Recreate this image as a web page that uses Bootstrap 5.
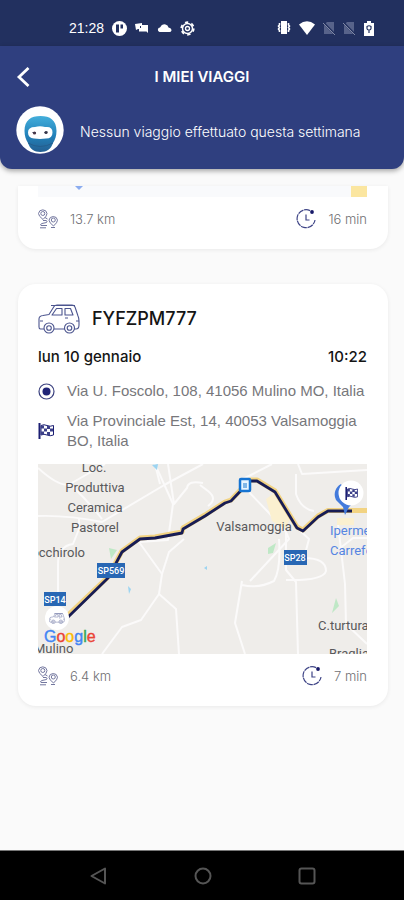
<!DOCTYPE html>
<html lang="it">
<head>
<meta charset="utf-8">
<meta name="viewport" content="width=device-width, initial-scale=1">
<title>I miei viaggi</title>
<link href="https://cdn.jsdelivr.net/npm/bootstrap@5.3.0/dist/css/bootstrap.min.css" rel="stylesheet">
<style>
  body { background: #fafafa; font-family: Inter, "Liberation Sans", sans-serif; font-size: 14px; line-height: 20px; color: #6f6f73; }
  svg { display: block; flex: none; }
  .status-bar { background: #22305f; color: #fff; height: 46px; padding: 18px 29px 0 69px; font-family: "Liberation Sans", sans-serif; }
  .app-header { background: #2f3f7f; color: #fff; border-radius: 0 0 12px 12px; box-shadow: 0 2px 5px rgba(0,0,0,.35); z-index: 1; padding: 0 16px 15px; }
  .title-row { height: 60px; padding-top: 2px; }
  .title-row h1 { font-size: 15px; line-height: 20px; font-weight: 600; }
  .title-row .side { width: 24px; }
  .message { font-weight: 300; }
  .trips { padding: 17px 16px 0 18px; }
  .trip { background: #fff; border: 0; border-radius: 18px; box-shadow: 0 1px 4px rgba(0,0,0,.07); padding: 20px 21px 20px 20px; }
  .trip-partial { border-radius: 0 0 18px 18px; padding-top: 0; margin-bottom: 35px; }
  .strong-text { color: #151515; font-weight: 500; }
  .plate { font-size: 18px; line-height: 30px; }
  .when { font-size: 15px; padding: 13px 0 14px; }
  .address { font-family: "Liberation Sans", sans-serif; font-size: 15px; color: #77777b; row-gap: 10px; }
  .stats { font-weight: 300; font-size: 13px; padding-top: 12px; }
  .route { margin-top: 13px; }
  .map text { font-family: Roboto, "Liberation Sans", sans-serif; font-size: 13px; fill: #59595b; }
  .map .shield { font-size: 9px; fill: #fff; font-weight: 500; }
  .map .poi { fill: #5585e2; }
  .map .brand { font-family: "Liberation Sans", sans-serif; font-size: 16px; font-weight: 400; }
  .map .g-blue { fill: #4285f4; stroke: #4285f4; stroke-width: .4px; }
  .map .g-red { fill: #ea4335; stroke: #ea4335; stroke-width: .4px; }
  .map .g-yellow { fill: #fbbc05; stroke: #fbbc05; stroke-width: .4px; }
  .map .g-green { fill: #34a853; stroke: #34a853; stroke-width: .4px; }
  .sys-nav { background: #000; height: 50px; border-top: 1px solid #777; padding: 0 84px 0 86px; }
</style>
<script src="https://cdn.jsdelivr.net/npm/bootstrap@5.3.0/dist/js/bootstrap.bundle.min.js"></script>
</head>
<body>
<svg width="0" height="0" class="position-absolute" aria-hidden="true">
  <defs>
    <symbol id="car" viewBox="0 0 42 30">
      <g fill="none" stroke="#4c558f" stroke-width="1.1" stroke-linejoin="round">
        <path d="M6 25H2.500Q1 25 1 23V15Q1 12 5 11.500L11 10.500 16 2.500Q17 1 19 1H34Q36 1 37 3L40 12Q41 14 41 17V21Q41 25 38 25H36M16 25H27"/>
        <path d="M14 11 18.500 4.500H24V11ZM27 4.500H32.500L35 11H27ZM13 1.500H37"/>
        <circle cx="11" cy="24" r="5"/><circle cx="11" cy="24" r="2.300"/>
        <circle cx="31.500" cy="24" r="5"/><circle cx="31.500" cy="24" r="2.300"/>
        <path d="M2 17H5M38 17H41M27 14H30"/>
      </g>
    </symbol>
    <symbol id="flag" viewBox="0 0 16 16">
      <path d="M1.500 0V16" stroke="#1c1f73" stroke-width="2"/>
      <path d="M3 2.500Q6 1 9 2.500T15.500 2.500V12Q12 13.500 9 12T3 12Z" fill="#fff" stroke="#1c1f73"/>
      <path d="M3 2.500h3v3H3zM9 3h3v3H9zM6 5.500h3v3H6zM12 5.500h3v3h-3zM3 8.500h3v3H3zM9 9h3v3H9z" fill="#3c4089"/>
    </symbol>
    <symbol id="distance" viewBox="0 0 20 20">
      <g fill="none" stroke="#73779f" stroke-width="1">
        <path d="M5 10.500Q.5 7 .5 4.500A4.300 4.300 0 0 1 9 4.500Q9 7 5 10.500Z"/><circle cx="4.800" cy="4.500" r="2"/>
        <path d="M15.500 17Q11 13.500 11 11.200A4.300 4.300 0 0 1 19.500 11.200Q19.500 13.500 15.500 17Z"/><circle cx="15.300" cy="11" r="2"/>
        <path d="M5 11.500H8Q10 12 8.500 13.500L4 14.500Q1.500 15.500 3 16.500H9M2 18.800H8M13 18.500H17M7 8.500 9.500 10"/>
      </g>
    </symbol>
    <symbol id="clock" viewBox="0 0 20 20">
      <g fill="none" stroke="#3e4486" stroke-width="1.200">
        <path d="M14 1.600A9 9 0 1 0 19 11" stroke-dasharray="6 .7"/><path d="M10 5.500V11H13.500"/>
      </g>
      <circle cx="16" cy="3" r="1.900" fill="#171968"/>
    </symbol>
  </defs>
</svg>

<div class="d-flex flex-column min-vh-100">
  <div class="status-bar d-flex justify-content-between align-items-start">
    <div class="d-flex align-items-center gap-2">
      <span>21:28</span>
      <svg width="15" height="15" viewBox="0 0 15 15"><circle cx="7.500" cy="7.500" r="7.500" fill="#fff"/><path d="M4 3.500H7V11.500H4ZM8.500 3.500H11V7.500H8.500Z" fill="#22305f"/></svg>
      <svg width="14" height="12" viewBox="0 0 14 12" fill="#fff"><path d="M0 2 7 1V4H5V7H3L1 8Z"/><path d="M6 3H13V11L11.500 9.500H4V6H6Z"/></svg>
      <svg width="15" height="10" viewBox="0 0 15 10"><path d="M2.500 9A2.300 2.300 0 0 1 3 4.500Q5 .5 8.500 1.500Q11 2 11.500 4.500Q14.500 5 14.500 7.500 14 9 12.500 9Z" fill="#fff"/></svg>
      <svg width="15" height="15" viewBox="0 0 15 15" fill="none" stroke="#fff"><circle cx="7.500" cy="7.500" r="5" stroke-width="1.500"/><circle cx="7.500" cy="7.500" r="2" stroke-width="1.300"/><circle cx="7.500" cy="7.500" r="6.300" stroke-width="1.700" stroke-dasharray="3.300 3.300"/></svg>
    </div>
    <div class="d-flex align-items-center gap-2">
      <svg width="14" height="20" viewBox="0 -3 14 20"><path d="M4 0H10V13H4Z" fill="#fff"/><path d="M2.500 2V4L1.500 5 2.500 6.500 1.500 8 2.500 9.500V11M11.500 2V4L12.500 5 11.500 6.500 12.500 8 11.500 9.500V11" fill="none" stroke="#fff" stroke-width="1.600"/></svg>
      <svg width="16" height="14" viewBox="0 0 16 14"><path d="M0 3.500Q8-3 16 3.500L8 14Z" fill="#fff"/></svg>
      <svg width="12" height="14" viewBox="0 0 12 14"><path d="M1 4 4 1H11V13H1Z" fill="#58638a"/><path d="M0 1 12 13.500" stroke="#22305f" stroke-width="2"/><path d="M0 2 12 14" stroke="#8088a5"/></svg>
      <svg width="12" height="14" viewBox="0 0 12 14"><path d="M1 4 4 1H11V13H1Z" fill="#58638a"/><path d="M0 1 12 13.500" stroke="#22305f" stroke-width="2"/><path d="M0 2 12 14" stroke="#8088a5"/></svg>
      <svg width="12" height="15" viewBox="0 0 12 15"><path d="M1 2H4V0H8V2H11V15H1Z" fill="#fff"/><path d="M6 12V9.500M4 5.500V7.500Q4 9 6 9T8 7.500V5.500Q6 4 4 5.500Z" fill="none" stroke="#22305f" stroke-width="1.200"/></svg>
    </div>
  </div>

  <header class="app-header position-relative">
    <div class="title-row d-flex align-items-center justify-content-between">
      <button type="button" class="btn p-0 border-0 side" aria-label="Indietro">
        <svg width="16" height="20" viewBox="0 0 16 20"><path d="M12.500 1 3 10 12.500 19" fill="none" stroke="#fff" stroke-width="2.800"/></svg>
      </button>
      <h1 class="m-0">I MIEI VIAGGI</h1>
      <span class="side"></span>
    </div>
    <div class="d-flex align-items-center gap-3">
      <svg width="48" height="48" viewBox="0 0 48 48" role="img" aria-label="Profilo">
        <defs><linearGradient id="hood" x2="0" y2="1"><stop stop-color="#43aedb"/><stop offset=".55" stop-color="#2281b9"/><stop offset="1" stop-color="#245f92"/></linearGradient></defs>
        <circle cx="24" cy="24" r="23.700" fill="#fff"/>
        <path d="M8.500 25C8.500 14 15 10 24.500 10S40.500 14 40.500 25C40.500 30 39 34 37 37C35 43 31 46 24.500 46S14 43 12 37C10 34 8.500 30 8.500 25Z" fill="url(#hood)"/>
        <path d="M12 37Q24 44 37 37" fill="none" stroke="#245b88" stroke-width=".8"/>
        <path d="M19 21Q24 19.500 29 21H31Q36.500 21 36.500 26.500 36.500 32.500 30 32.500L24 33 18 32.500Q12 32 12 26.500 12 21 19 21Z" fill="#fff"/>
        <circle cx="18.500" cy="27" r="1.600" fill="#55384b"/><circle cx="30" cy="26.500" r="1.600" fill="#343347"/>
        <path d="M16.500 26.500 20 27M28.500 26.500 31.500 26" stroke="#353549"/>
      </svg>
      <p class="message m-0 pt-1">Nessun viaggio effettuato questa settimana</p>
    </div>
  </header>

  <main class="trips flex-grow-1">
    <article class="card trip trip-partial">
      <svg class="w-100" viewBox="0 0 329 11" role="img" aria-label="Mappa">
        <path d="M0 0H329V11H0Z" fill="#f9fafc"/><path d="M37 0H45L41 4Z" fill="#8bacef"/><path d="M313 0H329V11H313Z" fill="#fbe6a0"/>
      </svg>
      <div class="stats d-flex justify-content-between align-items-center">
        <span class="d-flex align-items-center gap-2"><svg width="24" height="20"><use href="#distance" width="20" height="20"/></svg>13.7 km</span>
        <span class="d-flex align-items-center gap-2"><svg width="24" height="20"><use href="#clock" width="20" height="20"/></svg>16 min</span>
      </div>
    </article>

    <article class="card trip">
      <div class="d-flex align-items-center gap-2">
        <svg width="46" height="30"><use href="#car" width="42" height="30"/></svg>
        <h2 class="plate strong-text m-0">FYFZPM777</h2>
      </div>
      <div class="when strong-text d-flex justify-content-between"><span>lun 10 gennaio</span><span>10:22</span></div>
      <div class="address d-flex flex-column">
        <div class="d-flex align-items-center gap-2">
          <svg width="21" height="17" viewBox="0 0 21 17"><circle cx="8.500" cy="8.500" r="7.500" fill="none" stroke="#3b417f" stroke-width="1.200"/><circle cx="8.500" cy="8.500" r="4" fill="#202477"/></svg>
          <span>Via U. Foscolo, 108, 41056 Mulino MO, Italia</span>
        </div>
        <div class="d-flex align-items-center gap-2">
          <svg width="21" height="16"><use href="#flag" width="16" height="16"/></svg>
          <span>Via Provinciale Est, 14, 40053 Valsamoggia BO, Italia</span>
        </div>
      </div>
      <svg class="map route w-100" viewBox="0 0 329 190" role="img" aria-label="Percorso del viaggio">
        <path d="M0 0H329V190H0Z" fill="#efedea"/>
        <g fill="none" stroke="#fbfafa" stroke-width="2" stroke-linejoin="round">
          <path d="M0 52Q30 51 64 58L128 20 165 0M0 4Q22 24 32 20M32 20 67 0M64 55Q51 38 32 20"/>
          <path d="M41 65 35 80Q20 82 20 100V140M41 65V55M117 0 135 40 130 76 101 78 124 110 121 130 103 156 84 163 64 190"/>
          <path d="M130 0 136 40 149 24Q150 16 165 19M117 0 122 20M124 110 131 88 146 75M121 130 138 145 141 190"/>
          <path d="M162 21 170 27Q180 35 170 42M208 25 232 50 248 68 251 75 212 117M248 68V106L258 118 260 190"/>
          <path d="M204 117 197 159 207 190M204 121Q220 125 236 117 243 105 241 75M248 116Q285 117 288 107 288 94 266 94M266 94 271 75 259 64"/>
          <path d="M260 0 264 10 329 6M258 10V30Q263 45 276 47M300 60 307 120 308 160 329 180M301 85 315 74H329M205 15 234 0"/>
        </g>
        <path d="M228 35 235 30 252 55 247 65 234 57Z" fill="#fbf0d0"/>
        <path d="M299 54H316V61H299Z" fill="#fbf0d0"/>
        <g fill="#bfe8c6"><path d="M71 84 79 86 73 95ZM230 84 238 79 235 89 230 90ZM298 134 301 142 294 149Z"/></g>
        <g fill="#9cd4f1"><path d="M114 1 120 0 119 6ZM90 122 93 125 91 130ZM166 104 169 102V106Z"/></g>
        <path d="M27 154 70 113 84 87 102 74 117 73 144 68 145 64 167 51 187 38 193 36 212 16H219L237 27 259 63 265 66 280 52 290 46.500H329" fill="none" stroke="#f2d382" stroke-width="5" stroke-linejoin="round"/>
        <path d="M28 155 70 114 84 88 102 75 117 74 144 69 145 65 167 52 187 39 193 37 212 17H219L237 28 259 64 265 67 280 53 290 47H314" fill="none" stroke="#171c55" stroke-width="2.800" stroke-linejoin="round"/>
        <text x="56" y="8" text-anchor="middle">Loc.</text>
        <text x="57" y="28" text-anchor="middle">Produttiva</text>
        <text x="57" y="48" text-anchor="middle">Ceramica</text>
        <text x="57" y="68" text-anchor="middle">Pastorel</text>
        <text x="47" y="93" text-anchor="end">occhirolo</text>
        <text x="216" y="67" text-anchor="middle">Valsamoggia</text>
        <text x="292" y="71" class="poi">Ipermercato</text>
        <text x="292" y="91" class="poi">Carrefour</text>
        <text x="280" y="166">C.turtura</text>
        <text x="291" y="194">Braglia</text>
        <text x="-4" y="189">Mulino</text>
        <g fill="#2867b4"><path d="M59 99H87V114H59ZM6 128H28V142H6ZM246 86H269V101H246Z"/></g>
        <text x="73" y="110" text-anchor="middle" class="shield">SP569</text>
        <text x="17" y="139" text-anchor="middle" class="shield">SP14</text>
        <text x="257" y="97" text-anchor="middle" class="shield">SP28</text>
        <rect x="202" y="15" width="10" height="12" rx="1" fill="#e9f5ff" stroke="#1674d2" stroke-width="2.500"/><path d="M205 19H209V24H205Z" fill="#80b6e8"/>
        <path d="M303 20A12 12 0 0 0 298 36L305 43 307 51 311 43 316 38Z" fill="#437bdc"/>
        <circle cx="313" cy="29" r="12.500" fill="#fff"/><use href="#flag" x="307" y="23" width="13" height="13"/>
        <circle cx="19" cy="154" r="12" fill="#fff"/><use href="#car" x="11" y="149" width="16" height="11"/>
        <text x="6" y="178" class="brand"><tspan class="g-blue">G</tspan><tspan class="g-red">o</tspan><tspan class="g-yellow">o</tspan><tspan class="g-blue">g</tspan><tspan class="g-green">l</tspan><tspan class="g-red">e</tspan></text>
      </svg>
      <div class="stats d-flex justify-content-between align-items-center">
        <span class="d-flex align-items-center gap-2"><svg width="24" height="20"><use href="#distance" width="20" height="20"/></svg>6.4 km</span>
        <span class="d-flex align-items-center gap-2"><svg width="24" height="20"><use href="#clock" width="20" height="20"/></svg>7 min</span>
      </div>
    </article>
  </main>

  <nav class="sys-nav d-flex justify-content-between align-items-center" aria-label="Navigazione di sistema">
    <button type="button" class="btn p-1 border-0" aria-label="Indietro"><svg width="18" height="18" viewBox="0 0 18 18"><path d="M15 1.500V16.500L1.500 9Z" fill="none" stroke="#555" stroke-width="2" stroke-linejoin="round"/></svg></button>
    <button type="button" class="btn p-1 border-0" aria-label="Home"><svg width="18" height="18" viewBox="0 0 18 18"><circle cx="9" cy="9" r="7.500" fill="none" stroke="#555" stroke-width="2"/></svg></button>
    <button type="button" class="btn p-1 border-0" aria-label="App recenti"><svg width="18" height="18" viewBox="0 0 18 18"><rect x="1.500" y="1.500" width="15" height="15" rx="2" fill="none" stroke="#555" stroke-width="2"/></svg></button>
  </nav>
</div>
</body>
</html>
